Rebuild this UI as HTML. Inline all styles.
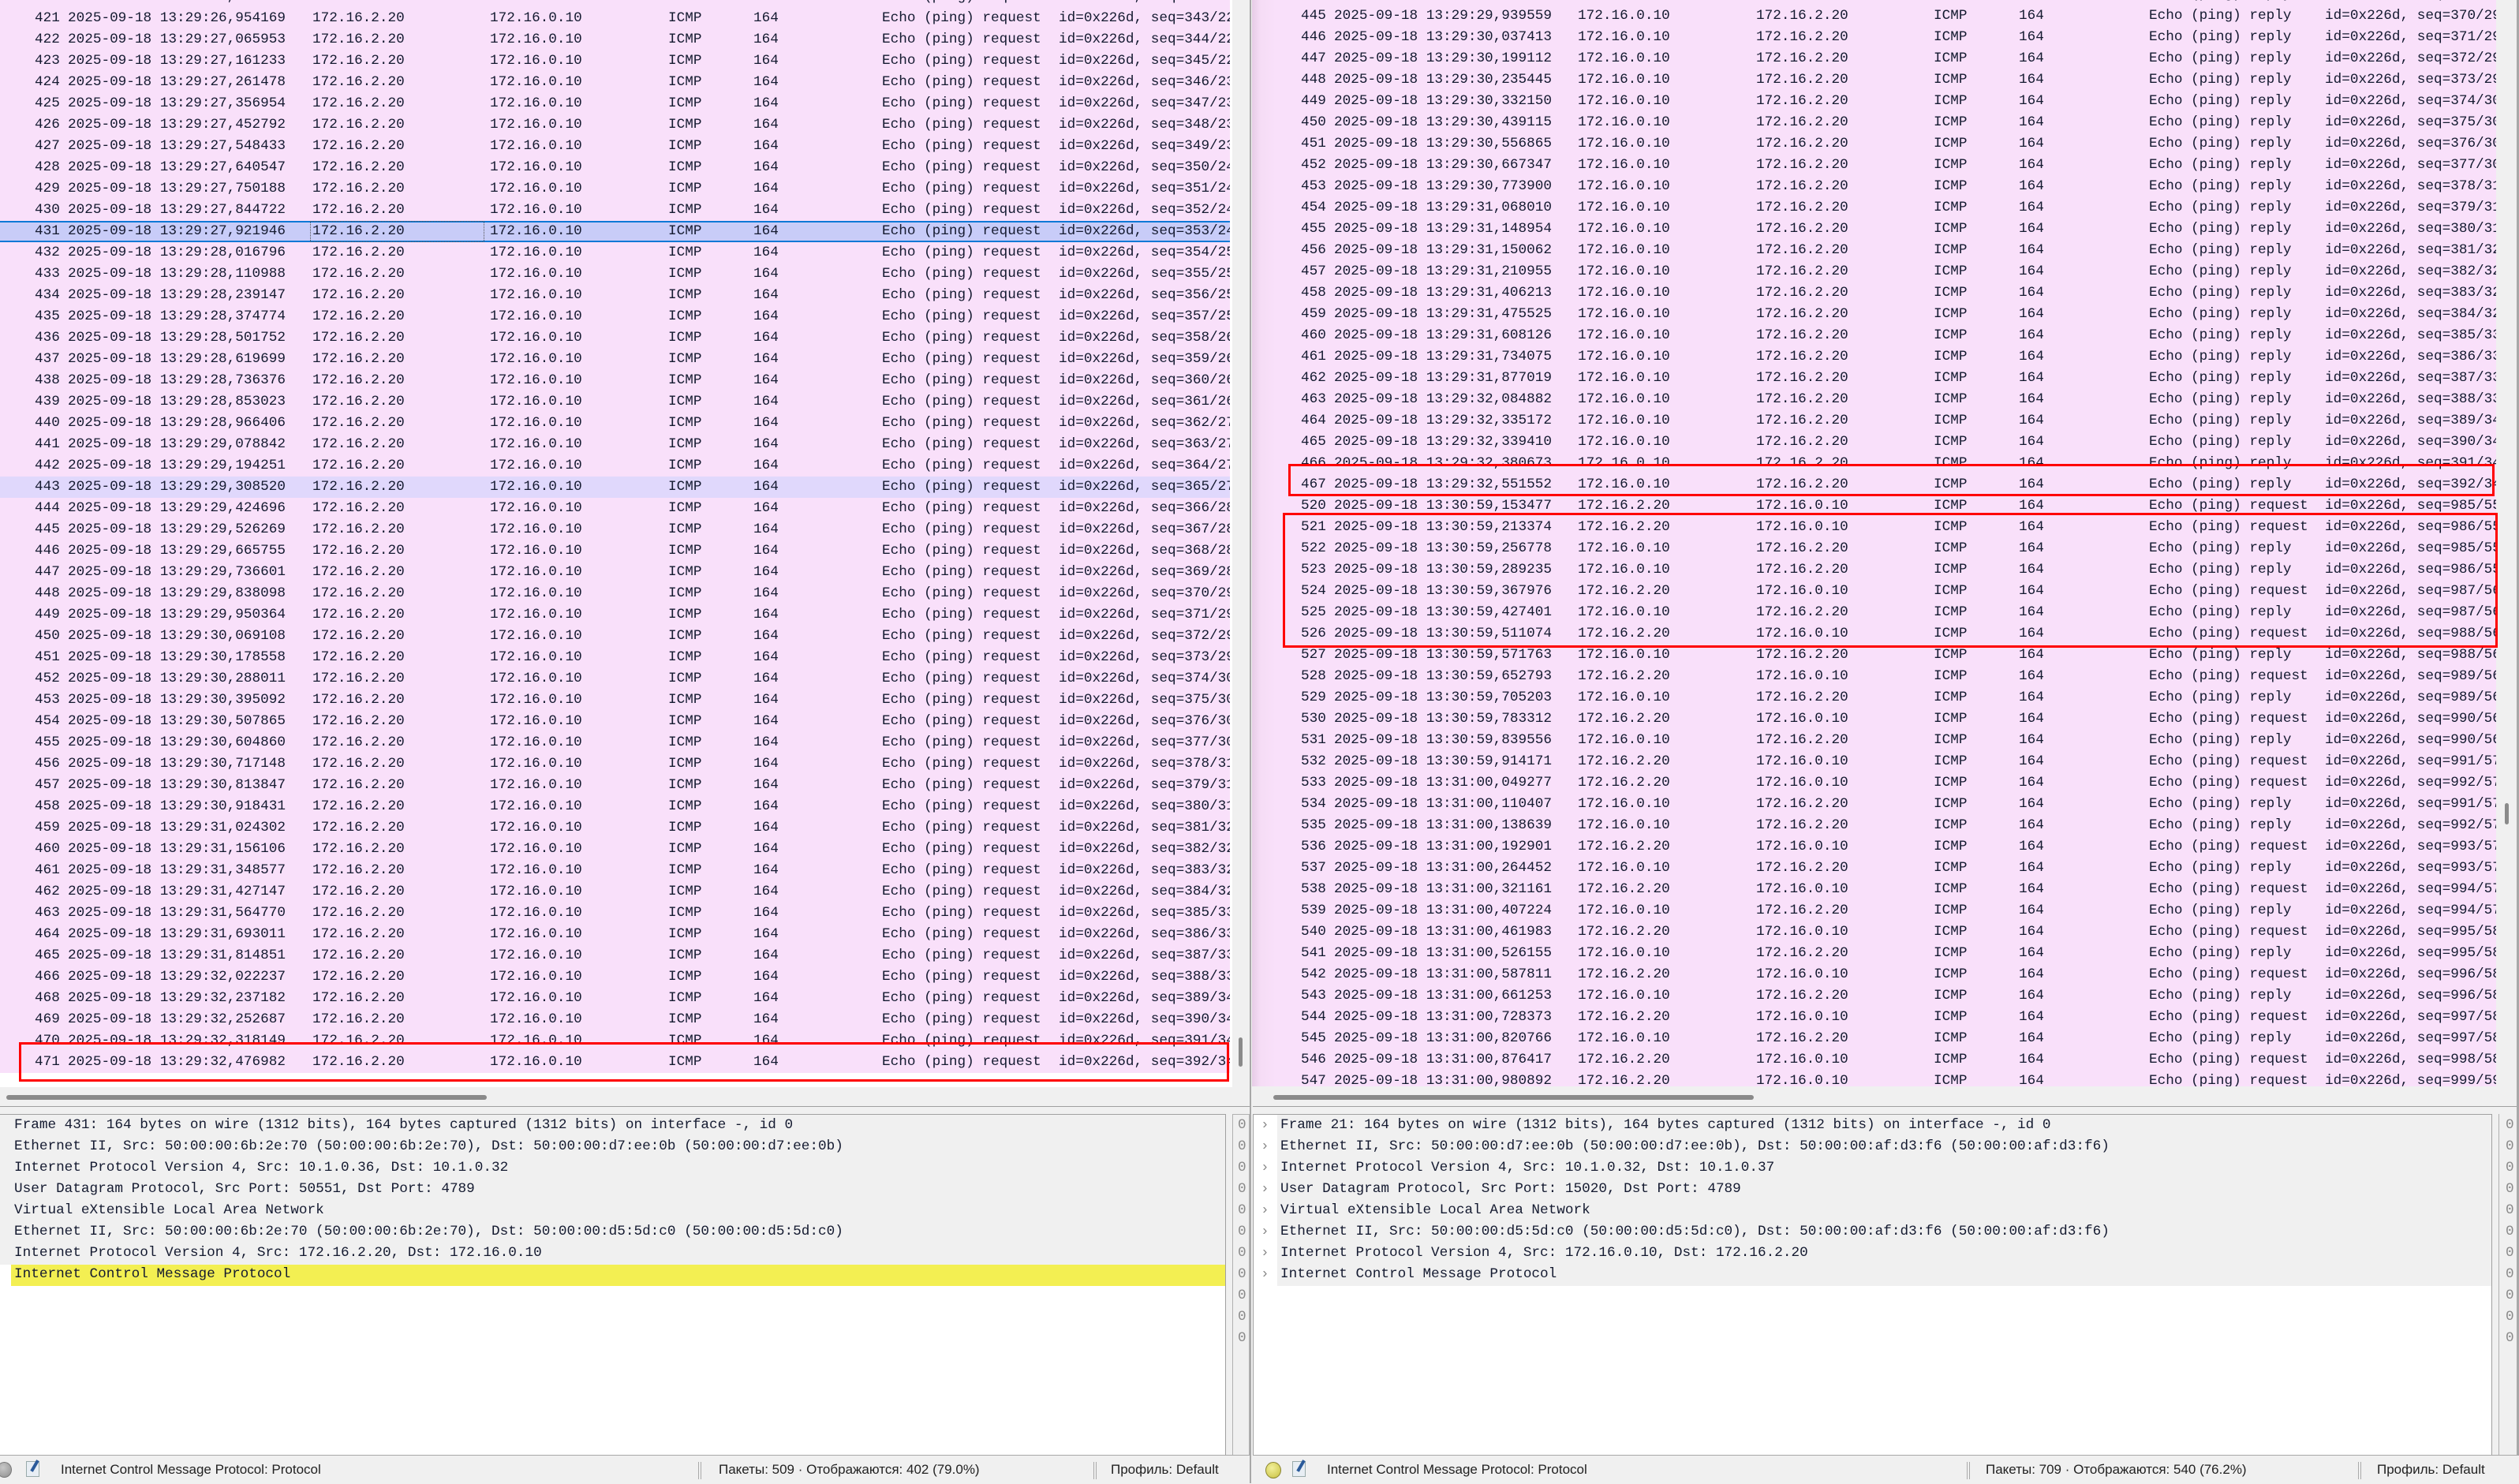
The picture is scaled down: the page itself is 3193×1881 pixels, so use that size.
<!DOCTYPE html>
<html><head><meta charset="utf-8">
<style>
*{margin:0;padding:0;box-sizing:border-box}
body{width:3193px;height:1880px;background:#f0f0f0;overflow:hidden;position:relative;font-family:"Liberation Mono",monospace;font-size:17.7px;color:#141a30}
.abs{position:absolute}
.list{position:absolute;overflow:hidden}
.r{height:27px;position:relative;white-space:pre;line-height:27px}
.r b{position:absolute;font-weight:normal;top:0}
.L .r b:nth-child(1){left:44px}.L .r b:nth-child(2){left:86px}.L .r b:nth-child(3){left:396px}.L .r b:nth-child(4){left:621px}.L .r b:nth-child(5){left:847px}.L .r b:nth-child(6){left:955px}.L .r b:nth-child(7){left:1118px}.L .r b:nth-child(8){left:1342px}
.R .r b:nth-child(1){left:62px}.R .r b:nth-child(2){left:104px}.R .r b:nth-child(3){left:413px}.R .r b:nth-child(4){left:639px}.R .r b:nth-child(5){left:864px}.R .r b:nth-child(6){left:972px}.R .r b:nth-child(7){left:1137px}.R .r b:nth-child(8){left:1360px}
.sel{background:#c8ccf8;border-top:2px solid #0a78d6;border-bottom:2px solid #0a78d6;line-height:23px}
.sel b{top:0}
.lav{background:#e0d8fc}
.box{position:absolute;border:3px solid #f00}
.det{position:absolute;white-space:nowrap;line-height:27px}
.det div{height:27px}
.bytes{position:absolute;color:#8a8a8a;line-height:27px;white-space:nowrap}
.st{position:absolute;top:1844px;height:36px;border-top:1px solid #a8a8a8;background:#f0f0f0;font-family:"Liberation Sans",sans-serif;font-size:17px;color:#222;line-height:36px;white-space:nowrap}
.st span{position:absolute;top:0}
.sep{position:absolute;top:8px;width:4px;height:22px;border-left:1px solid #aaa;border-right:1px solid #aaa}
</style></head><body>

<!-- LEFT WINDOW -->
<div class="abs" style="left:0;top:0;width:1559px;height:1360px;background:#f9e0fa"></div>
<div class="abs" style="left:0;top:1360px;width:1562px;height:18px;background:#fff"></div>
<div class="abs" style="left:1559px;top:0;width:3px;height:1378px;background:#fff"></div>
<div class="abs" style="left:1570px;top:1315px;width:5px;height:37px;background:#8a8a8a;border-radius:3px"></div>
<div class="abs" style="left:8px;top:1388px;width:609px;height:6px;background:#8a8a8a;border-radius:3px"></div>
<div class="abs" style="left:0;top:1402px;width:1584px;height:1px;background:#a0a0a0"></div>
<div class="abs" style="left:1584px;top:0;width:2px;height:1880px;background:#a8a8a8"></div>

<div class="list L" style="left:0;top:-17px;width:1559px;height:1377px">
<div class="r"><b>420</b><b>2025-09-18 13:29:26,858217</b><b>172.16.2.20</b><b>172.16.0.10</b><b>ICMP</b><b>164</b><b>Echo (ping) request</b><b>id=0x226d, seq=342/22017</b></div>
<div class="r"><b>421</b><b>2025-09-18 13:29:26,954169</b><b>172.16.2.20</b><b>172.16.0.10</b><b>ICMP</b><b>164</b><b>Echo (ping) request</b><b>id=0x226d, seq=343/22273</b></div>
<div class="r"><b>422</b><b>2025-09-18 13:29:27,065953</b><b>172.16.2.20</b><b>172.16.0.10</b><b>ICMP</b><b>164</b><b>Echo (ping) request</b><b>id=0x226d, seq=344/22529</b></div>
<div class="r"><b>423</b><b>2025-09-18 13:29:27,161233</b><b>172.16.2.20</b><b>172.16.0.10</b><b>ICMP</b><b>164</b><b>Echo (ping) request</b><b>id=0x226d, seq=345/22785</b></div>
<div class="r"><b>424</b><b>2025-09-18 13:29:27,261478</b><b>172.16.2.20</b><b>172.16.0.10</b><b>ICMP</b><b>164</b><b>Echo (ping) request</b><b>id=0x226d, seq=346/23041</b></div>
<div class="r"><b>425</b><b>2025-09-18 13:29:27,356954</b><b>172.16.2.20</b><b>172.16.0.10</b><b>ICMP</b><b>164</b><b>Echo (ping) request</b><b>id=0x226d, seq=347/23297</b></div>
<div class="r"><b>426</b><b>2025-09-18 13:29:27,452792</b><b>172.16.2.20</b><b>172.16.0.10</b><b>ICMP</b><b>164</b><b>Echo (ping) request</b><b>id=0x226d, seq=348/23553</b></div>
<div class="r"><b>427</b><b>2025-09-18 13:29:27,548433</b><b>172.16.2.20</b><b>172.16.0.10</b><b>ICMP</b><b>164</b><b>Echo (ping) request</b><b>id=0x226d, seq=349/23809</b></div>
<div class="r"><b>428</b><b>2025-09-18 13:29:27,640547</b><b>172.16.2.20</b><b>172.16.0.10</b><b>ICMP</b><b>164</b><b>Echo (ping) request</b><b>id=0x226d, seq=350/24065</b></div>
<div class="r"><b>429</b><b>2025-09-18 13:29:27,750188</b><b>172.16.2.20</b><b>172.16.0.10</b><b>ICMP</b><b>164</b><b>Echo (ping) request</b><b>id=0x226d, seq=351/24321</b></div>
<div class="r"><b>430</b><b>2025-09-18 13:29:27,844722</b><b>172.16.2.20</b><b>172.16.0.10</b><b>ICMP</b><b>164</b><b>Echo (ping) request</b><b>id=0x226d, seq=352/24577</b></div>
<div class="r sel"><b>431</b><b>2025-09-18 13:29:27,921946</b><b>172.16.2.20</b><b>172.16.0.10</b><b>ICMP</b><b>164</b><b>Echo (ping) request</b><b>id=0x226d, seq=353/24833</b><i class="abs" style="left:393px;top:-2px;width:221px;height:27px;border:1px dotted #555"></i></div>
<div class="r"><b>432</b><b>2025-09-18 13:29:28,016796</b><b>172.16.2.20</b><b>172.16.0.10</b><b>ICMP</b><b>164</b><b>Echo (ping) request</b><b>id=0x226d, seq=354/25089</b></div>
<div class="r"><b>433</b><b>2025-09-18 13:29:28,110988</b><b>172.16.2.20</b><b>172.16.0.10</b><b>ICMP</b><b>164</b><b>Echo (ping) request</b><b>id=0x226d, seq=355/25345</b></div>
<div class="r"><b>434</b><b>2025-09-18 13:29:28,239147</b><b>172.16.2.20</b><b>172.16.0.10</b><b>ICMP</b><b>164</b><b>Echo (ping) request</b><b>id=0x226d, seq=356/25601</b></div>
<div class="r"><b>435</b><b>2025-09-18 13:29:28,374774</b><b>172.16.2.20</b><b>172.16.0.10</b><b>ICMP</b><b>164</b><b>Echo (ping) request</b><b>id=0x226d, seq=357/25857</b></div>
<div class="r"><b>436</b><b>2025-09-18 13:29:28,501752</b><b>172.16.2.20</b><b>172.16.0.10</b><b>ICMP</b><b>164</b><b>Echo (ping) request</b><b>id=0x226d, seq=358/26113</b></div>
<div class="r"><b>437</b><b>2025-09-18 13:29:28,619699</b><b>172.16.2.20</b><b>172.16.0.10</b><b>ICMP</b><b>164</b><b>Echo (ping) request</b><b>id=0x226d, seq=359/26369</b></div>
<div class="r"><b>438</b><b>2025-09-18 13:29:28,736376</b><b>172.16.2.20</b><b>172.16.0.10</b><b>ICMP</b><b>164</b><b>Echo (ping) request</b><b>id=0x226d, seq=360/26625</b></div>
<div class="r"><b>439</b><b>2025-09-18 13:29:28,853023</b><b>172.16.2.20</b><b>172.16.0.10</b><b>ICMP</b><b>164</b><b>Echo (ping) request</b><b>id=0x226d, seq=361/26881</b></div>
<div class="r"><b>440</b><b>2025-09-18 13:29:28,966406</b><b>172.16.2.20</b><b>172.16.0.10</b><b>ICMP</b><b>164</b><b>Echo (ping) request</b><b>id=0x226d, seq=362/27137</b></div>
<div class="r"><b>441</b><b>2025-09-18 13:29:29,078842</b><b>172.16.2.20</b><b>172.16.0.10</b><b>ICMP</b><b>164</b><b>Echo (ping) request</b><b>id=0x226d, seq=363/27393</b></div>
<div class="r"><b>442</b><b>2025-09-18 13:29:29,194251</b><b>172.16.2.20</b><b>172.16.0.10</b><b>ICMP</b><b>164</b><b>Echo (ping) request</b><b>id=0x226d, seq=364/27649</b></div>
<div class="r lav"><b>443</b><b>2025-09-18 13:29:29,308520</b><b>172.16.2.20</b><b>172.16.0.10</b><b>ICMP</b><b>164</b><b>Echo (ping) request</b><b>id=0x226d, seq=365/27905</b></div>
<div class="r"><b>444</b><b>2025-09-18 13:29:29,424696</b><b>172.16.2.20</b><b>172.16.0.10</b><b>ICMP</b><b>164</b><b>Echo (ping) request</b><b>id=0x226d, seq=366/28161</b></div>
<div class="r"><b>445</b><b>2025-09-18 13:29:29,526269</b><b>172.16.2.20</b><b>172.16.0.10</b><b>ICMP</b><b>164</b><b>Echo (ping) request</b><b>id=0x226d, seq=367/28417</b></div>
<div class="r"><b>446</b><b>2025-09-18 13:29:29,665755</b><b>172.16.2.20</b><b>172.16.0.10</b><b>ICMP</b><b>164</b><b>Echo (ping) request</b><b>id=0x226d, seq=368/28673</b></div>
<div class="r"><b>447</b><b>2025-09-18 13:29:29,736601</b><b>172.16.2.20</b><b>172.16.0.10</b><b>ICMP</b><b>164</b><b>Echo (ping) request</b><b>id=0x226d, seq=369/28929</b></div>
<div class="r"><b>448</b><b>2025-09-18 13:29:29,838098</b><b>172.16.2.20</b><b>172.16.0.10</b><b>ICMP</b><b>164</b><b>Echo (ping) request</b><b>id=0x226d, seq=370/29185</b></div>
<div class="r"><b>449</b><b>2025-09-18 13:29:29,950364</b><b>172.16.2.20</b><b>172.16.0.10</b><b>ICMP</b><b>164</b><b>Echo (ping) request</b><b>id=0x226d, seq=371/29441</b></div>
<div class="r"><b>450</b><b>2025-09-18 13:29:30,069108</b><b>172.16.2.20</b><b>172.16.0.10</b><b>ICMP</b><b>164</b><b>Echo (ping) request</b><b>id=0x226d, seq=372/29697</b></div>
<div class="r"><b>451</b><b>2025-09-18 13:29:30,178558</b><b>172.16.2.20</b><b>172.16.0.10</b><b>ICMP</b><b>164</b><b>Echo (ping) request</b><b>id=0x226d, seq=373/29953</b></div>
<div class="r"><b>452</b><b>2025-09-18 13:29:30,288011</b><b>172.16.2.20</b><b>172.16.0.10</b><b>ICMP</b><b>164</b><b>Echo (ping) request</b><b>id=0x226d, seq=374/30209</b></div>
<div class="r"><b>453</b><b>2025-09-18 13:29:30,395092</b><b>172.16.2.20</b><b>172.16.0.10</b><b>ICMP</b><b>164</b><b>Echo (ping) request</b><b>id=0x226d, seq=375/30465</b></div>
<div class="r"><b>454</b><b>2025-09-18 13:29:30,507865</b><b>172.16.2.20</b><b>172.16.0.10</b><b>ICMP</b><b>164</b><b>Echo (ping) request</b><b>id=0x226d, seq=376/30721</b></div>
<div class="r"><b>455</b><b>2025-09-18 13:29:30,604860</b><b>172.16.2.20</b><b>172.16.0.10</b><b>ICMP</b><b>164</b><b>Echo (ping) request</b><b>id=0x226d, seq=377/30977</b></div>
<div class="r"><b>456</b><b>2025-09-18 13:29:30,717148</b><b>172.16.2.20</b><b>172.16.0.10</b><b>ICMP</b><b>164</b><b>Echo (ping) request</b><b>id=0x226d, seq=378/31233</b></div>
<div class="r"><b>457</b><b>2025-09-18 13:29:30,813847</b><b>172.16.2.20</b><b>172.16.0.10</b><b>ICMP</b><b>164</b><b>Echo (ping) request</b><b>id=0x226d, seq=379/31489</b></div>
<div class="r"><b>458</b><b>2025-09-18 13:29:30,918431</b><b>172.16.2.20</b><b>172.16.0.10</b><b>ICMP</b><b>164</b><b>Echo (ping) request</b><b>id=0x226d, seq=380/31745</b></div>
<div class="r"><b>459</b><b>2025-09-18 13:29:31,024302</b><b>172.16.2.20</b><b>172.16.0.10</b><b>ICMP</b><b>164</b><b>Echo (ping) request</b><b>id=0x226d, seq=381/32001</b></div>
<div class="r"><b>460</b><b>2025-09-18 13:29:31,156106</b><b>172.16.2.20</b><b>172.16.0.10</b><b>ICMP</b><b>164</b><b>Echo (ping) request</b><b>id=0x226d, seq=382/32257</b></div>
<div class="r"><b>461</b><b>2025-09-18 13:29:31,348577</b><b>172.16.2.20</b><b>172.16.0.10</b><b>ICMP</b><b>164</b><b>Echo (ping) request</b><b>id=0x226d, seq=383/32513</b></div>
<div class="r"><b>462</b><b>2025-09-18 13:29:31,427147</b><b>172.16.2.20</b><b>172.16.0.10</b><b>ICMP</b><b>164</b><b>Echo (ping) request</b><b>id=0x226d, seq=384/32769</b></div>
<div class="r"><b>463</b><b>2025-09-18 13:29:31,564770</b><b>172.16.2.20</b><b>172.16.0.10</b><b>ICMP</b><b>164</b><b>Echo (ping) request</b><b>id=0x226d, seq=385/33025</b></div>
<div class="r"><b>464</b><b>2025-09-18 13:29:31,693011</b><b>172.16.2.20</b><b>172.16.0.10</b><b>ICMP</b><b>164</b><b>Echo (ping) request</b><b>id=0x226d, seq=386/33281</b></div>
<div class="r"><b>465</b><b>2025-09-18 13:29:31,814851</b><b>172.16.2.20</b><b>172.16.0.10</b><b>ICMP</b><b>164</b><b>Echo (ping) request</b><b>id=0x226d, seq=387/33537</b></div>
<div class="r"><b>466</b><b>2025-09-18 13:29:32,022237</b><b>172.16.2.20</b><b>172.16.0.10</b><b>ICMP</b><b>164</b><b>Echo (ping) request</b><b>id=0x226d, seq=388/33793</b></div>
<div class="r"><b>468</b><b>2025-09-18 13:29:32,237182</b><b>172.16.2.20</b><b>172.16.0.10</b><b>ICMP</b><b>164</b><b>Echo (ping) request</b><b>id=0x226d, seq=389/34049</b></div>
<div class="r"><b>469</b><b>2025-09-18 13:29:32,252687</b><b>172.16.2.20</b><b>172.16.0.10</b><b>ICMP</b><b>164</b><b>Echo (ping) request</b><b>id=0x226d, seq=390/34305</b></div>
<div class="r"><b>470</b><b>2025-09-18 13:29:32,318149</b><b>172.16.2.20</b><b>172.16.0.10</b><b>ICMP</b><b>164</b><b>Echo (ping) request</b><b>id=0x226d, seq=391/34561</b></div>
<div class="r"><b>471</b><b>2025-09-18 13:29:32,476982</b><b>172.16.2.20</b><b>172.16.0.10</b><b>ICMP</b><b>164</b><b>Echo (ping) request</b><b>id=0x226d, seq=392/34817</b></div>
</div>
<div class="box" style="left:24px;top:1321px;width:1534px;height:50px"></div>

<!-- left details -->
<div class="abs" style="left:0;top:1412px;width:1554px;height:433px;background:#fff;border:1px solid #a0a0a0;border-left:none"></div>
<div class="abs" style="left:0;top:1413px;width:1553px;height:190px;background:#f0f0f0"></div>
<div class="abs" style="left:14px;top:1603px;width:1539px;height:27px;background:#f3ef52"></div>
<div class="det" style="left:18px;top:1413px"><div>Frame 431: 164 bytes on wire (1312 bits), 164 bytes captured (1312 bits) on interface -, id 0</div><div>Ethernet II, Src: 50:00:00:6b:2e:70 (50:00:00:6b:2e:70), Dst: 50:00:00:d7:ee:0b (50:00:00:d7:ee:0b)</div><div>Internet Protocol Version 4, Src: 10.1.0.36, Dst: 10.1.0.32</div><div>User Datagram Protocol, Src Port: 50551, Dst Port: 4789</div><div>Virtual eXtensible Local Area Network</div><div>Ethernet II, Src: 50:00:00:6b:2e:70 (50:00:00:6b:2e:70), Dst: 50:00:00:d5:5d:c0 (50:00:00:d5:5d:c0)</div><div>Internet Protocol Version 4, Src: 172.16.2.20, Dst: 172.16.0.10</div><div>Internet Control Message Protocol</div></div>
<div class="abs" style="left:1562px;top:1412px;width:22px;height:433px;background:#f0f0f0;border:1px solid #b0b0b0"></div>
<div class="bytes" style="left:1569px;top:1413px">0<br>0<br>0<br>0<br>0<br>0<br>0<br>0<br>0<br>0<br>0</div>

<!-- RIGHT WINDOW -->
<div class="abs" style="left:1587px;top:0;width:1577px;height:1377px;background:linear-gradient(90deg,#e6cce6 0,#f5dcf5 10px,#f9e0fa 30px)"></div>
<div class="abs" style="left:3164px;top:0;width:26px;height:1380px;background:#f0f0f0"></div>
<div class="abs" style="left:3190px;top:0;width:3px;height:1880px;background:#a8a8a8"></div>
<div class="abs" style="left:3175px;top:1018px;width:5px;height:27px;background:#8a8a8a;border-radius:3px"></div>
<div class="abs" style="left:1614px;top:1388px;width:609px;height:6px;background:#8a8a8a;border-radius:3px"></div>
<div class="abs" style="left:1588px;top:1402px;width:1602px;height:1px;background:#a0a0a0"></div>

<div class="list R" style="left:1587px;top:-20px;width:1577px;height:1397px">
<div class="r"><b>444</b><b>2025-09-18 13:29:29,853150</b><b>172.16.0.10</b><b>172.16.2.20</b><b>ICMP</b><b>164</b><b>Echo (ping) reply</b><b>id=0x226d, seq=369/28929</b></div>
<div class="r"><b>445</b><b>2025-09-18 13:29:29,939559</b><b>172.16.0.10</b><b>172.16.2.20</b><b>ICMP</b><b>164</b><b>Echo (ping) reply</b><b>id=0x226d, seq=370/29185</b></div>
<div class="r"><b>446</b><b>2025-09-18 13:29:30,037413</b><b>172.16.0.10</b><b>172.16.2.20</b><b>ICMP</b><b>164</b><b>Echo (ping) reply</b><b>id=0x226d, seq=371/29441</b></div>
<div class="r"><b>447</b><b>2025-09-18 13:29:30,199112</b><b>172.16.0.10</b><b>172.16.2.20</b><b>ICMP</b><b>164</b><b>Echo (ping) reply</b><b>id=0x226d, seq=372/29697</b></div>
<div class="r"><b>448</b><b>2025-09-18 13:29:30,235445</b><b>172.16.0.10</b><b>172.16.2.20</b><b>ICMP</b><b>164</b><b>Echo (ping) reply</b><b>id=0x226d, seq=373/29953</b></div>
<div class="r"><b>449</b><b>2025-09-18 13:29:30,332150</b><b>172.16.0.10</b><b>172.16.2.20</b><b>ICMP</b><b>164</b><b>Echo (ping) reply</b><b>id=0x226d, seq=374/30209</b></div>
<div class="r"><b>450</b><b>2025-09-18 13:29:30,439115</b><b>172.16.0.10</b><b>172.16.2.20</b><b>ICMP</b><b>164</b><b>Echo (ping) reply</b><b>id=0x226d, seq=375/30465</b></div>
<div class="r"><b>451</b><b>2025-09-18 13:29:30,556865</b><b>172.16.0.10</b><b>172.16.2.20</b><b>ICMP</b><b>164</b><b>Echo (ping) reply</b><b>id=0x226d, seq=376/30721</b></div>
<div class="r"><b>452</b><b>2025-09-18 13:29:30,667347</b><b>172.16.0.10</b><b>172.16.2.20</b><b>ICMP</b><b>164</b><b>Echo (ping) reply</b><b>id=0x226d, seq=377/30977</b></div>
<div class="r"><b>453</b><b>2025-09-18 13:29:30,773900</b><b>172.16.0.10</b><b>172.16.2.20</b><b>ICMP</b><b>164</b><b>Echo (ping) reply</b><b>id=0x226d, seq=378/31233</b></div>
<div class="r"><b>454</b><b>2025-09-18 13:29:31,068010</b><b>172.16.0.10</b><b>172.16.2.20</b><b>ICMP</b><b>164</b><b>Echo (ping) reply</b><b>id=0x226d, seq=379/31489</b></div>
<div class="r"><b>455</b><b>2025-09-18 13:29:31,148954</b><b>172.16.0.10</b><b>172.16.2.20</b><b>ICMP</b><b>164</b><b>Echo (ping) reply</b><b>id=0x226d, seq=380/31745</b></div>
<div class="r"><b>456</b><b>2025-09-18 13:29:31,150062</b><b>172.16.0.10</b><b>172.16.2.20</b><b>ICMP</b><b>164</b><b>Echo (ping) reply</b><b>id=0x226d, seq=381/32001</b></div>
<div class="r"><b>457</b><b>2025-09-18 13:29:31,210955</b><b>172.16.0.10</b><b>172.16.2.20</b><b>ICMP</b><b>164</b><b>Echo (ping) reply</b><b>id=0x226d, seq=382/32257</b></div>
<div class="r"><b>458</b><b>2025-09-18 13:29:31,406213</b><b>172.16.0.10</b><b>172.16.2.20</b><b>ICMP</b><b>164</b><b>Echo (ping) reply</b><b>id=0x226d, seq=383/32513</b></div>
<div class="r"><b>459</b><b>2025-09-18 13:29:31,475525</b><b>172.16.0.10</b><b>172.16.2.20</b><b>ICMP</b><b>164</b><b>Echo (ping) reply</b><b>id=0x226d, seq=384/32769</b></div>
<div class="r"><b>460</b><b>2025-09-18 13:29:31,608126</b><b>172.16.0.10</b><b>172.16.2.20</b><b>ICMP</b><b>164</b><b>Echo (ping) reply</b><b>id=0x226d, seq=385/33025</b></div>
<div class="r"><b>461</b><b>2025-09-18 13:29:31,734075</b><b>172.16.0.10</b><b>172.16.2.20</b><b>ICMP</b><b>164</b><b>Echo (ping) reply</b><b>id=0x226d, seq=386/33281</b></div>
<div class="r"><b>462</b><b>2025-09-18 13:29:31,877019</b><b>172.16.0.10</b><b>172.16.2.20</b><b>ICMP</b><b>164</b><b>Echo (ping) reply</b><b>id=0x226d, seq=387/33537</b></div>
<div class="r"><b>463</b><b>2025-09-18 13:29:32,084882</b><b>172.16.0.10</b><b>172.16.2.20</b><b>ICMP</b><b>164</b><b>Echo (ping) reply</b><b>id=0x226d, seq=388/33793</b></div>
<div class="r"><b>464</b><b>2025-09-18 13:29:32,335172</b><b>172.16.0.10</b><b>172.16.2.20</b><b>ICMP</b><b>164</b><b>Echo (ping) reply</b><b>id=0x226d, seq=389/34049</b></div>
<div class="r"><b>465</b><b>2025-09-18 13:29:32,339410</b><b>172.16.0.10</b><b>172.16.2.20</b><b>ICMP</b><b>164</b><b>Echo (ping) reply</b><b>id=0x226d, seq=390/34305</b></div>
<div class="r"><b>466</b><b>2025-09-18 13:29:32,380673</b><b>172.16.0.10</b><b>172.16.2.20</b><b>ICMP</b><b>164</b><b>Echo (ping) reply</b><b>id=0x226d, seq=391/34561</b></div>
<div class="r"><b>467</b><b>2025-09-18 13:29:32,551552</b><b>172.16.0.10</b><b>172.16.2.20</b><b>ICMP</b><b>164</b><b>Echo (ping) reply</b><b>id=0x226d, seq=392/34817</b></div>
<div class="r"><b>520</b><b>2025-09-18 13:30:59,153477</b><b>172.16.2.20</b><b>172.16.0.10</b><b>ICMP</b><b>164</b><b>Echo (ping) request</b><b>id=0x226d, seq=985/55555</b></div>
<div class="r"><b>521</b><b>2025-09-18 13:30:59,213374</b><b>172.16.2.20</b><b>172.16.0.10</b><b>ICMP</b><b>164</b><b>Echo (ping) request</b><b>id=0x226d, seq=986/55811</b></div>
<div class="r"><b>522</b><b>2025-09-18 13:30:59,256778</b><b>172.16.0.10</b><b>172.16.2.20</b><b>ICMP</b><b>164</b><b>Echo (ping) reply</b><b>id=0x226d, seq=985/55555</b></div>
<div class="r"><b>523</b><b>2025-09-18 13:30:59,289235</b><b>172.16.0.10</b><b>172.16.2.20</b><b>ICMP</b><b>164</b><b>Echo (ping) reply</b><b>id=0x226d, seq=986/55811</b></div>
<div class="r"><b>524</b><b>2025-09-18 13:30:59,367976</b><b>172.16.2.20</b><b>172.16.0.10</b><b>ICMP</b><b>164</b><b>Echo (ping) request</b><b>id=0x226d, seq=987/56067</b></div>
<div class="r"><b>525</b><b>2025-09-18 13:30:59,427401</b><b>172.16.0.10</b><b>172.16.2.20</b><b>ICMP</b><b>164</b><b>Echo (ping) reply</b><b>id=0x226d, seq=987/56067</b></div>
<div class="r"><b>526</b><b>2025-09-18 13:30:59,511074</b><b>172.16.2.20</b><b>172.16.0.10</b><b>ICMP</b><b>164</b><b>Echo (ping) request</b><b>id=0x226d, seq=988/56323</b></div>
<div class="r"><b>527</b><b>2025-09-18 13:30:59,571763</b><b>172.16.0.10</b><b>172.16.2.20</b><b>ICMP</b><b>164</b><b>Echo (ping) reply</b><b>id=0x226d, seq=988/56323</b></div>
<div class="r"><b>528</b><b>2025-09-18 13:30:59,652793</b><b>172.16.2.20</b><b>172.16.0.10</b><b>ICMP</b><b>164</b><b>Echo (ping) request</b><b>id=0x226d, seq=989/56579</b></div>
<div class="r"><b>529</b><b>2025-09-18 13:30:59,705203</b><b>172.16.0.10</b><b>172.16.2.20</b><b>ICMP</b><b>164</b><b>Echo (ping) reply</b><b>id=0x226d, seq=989/56579</b></div>
<div class="r"><b>530</b><b>2025-09-18 13:30:59,783312</b><b>172.16.2.20</b><b>172.16.0.10</b><b>ICMP</b><b>164</b><b>Echo (ping) request</b><b>id=0x226d, seq=990/56835</b></div>
<div class="r"><b>531</b><b>2025-09-18 13:30:59,839556</b><b>172.16.0.10</b><b>172.16.2.20</b><b>ICMP</b><b>164</b><b>Echo (ping) reply</b><b>id=0x226d, seq=990/56835</b></div>
<div class="r"><b>532</b><b>2025-09-18 13:30:59,914171</b><b>172.16.2.20</b><b>172.16.0.10</b><b>ICMP</b><b>164</b><b>Echo (ping) request</b><b>id=0x226d, seq=991/57091</b></div>
<div class="r"><b>533</b><b>2025-09-18 13:31:00,049277</b><b>172.16.2.20</b><b>172.16.0.10</b><b>ICMP</b><b>164</b><b>Echo (ping) request</b><b>id=0x226d, seq=992/57347</b></div>
<div class="r"><b>534</b><b>2025-09-18 13:31:00,110407</b><b>172.16.0.10</b><b>172.16.2.20</b><b>ICMP</b><b>164</b><b>Echo (ping) reply</b><b>id=0x226d, seq=991/57091</b></div>
<div class="r"><b>535</b><b>2025-09-18 13:31:00,138639</b><b>172.16.0.10</b><b>172.16.2.20</b><b>ICMP</b><b>164</b><b>Echo (ping) reply</b><b>id=0x226d, seq=992/57347</b></div>
<div class="r"><b>536</b><b>2025-09-18 13:31:00,192901</b><b>172.16.2.20</b><b>172.16.0.10</b><b>ICMP</b><b>164</b><b>Echo (ping) request</b><b>id=0x226d, seq=993/57603</b></div>
<div class="r"><b>537</b><b>2025-09-18 13:31:00,264452</b><b>172.16.0.10</b><b>172.16.2.20</b><b>ICMP</b><b>164</b><b>Echo (ping) reply</b><b>id=0x226d, seq=993/57603</b></div>
<div class="r"><b>538</b><b>2025-09-18 13:31:00,321161</b><b>172.16.2.20</b><b>172.16.0.10</b><b>ICMP</b><b>164</b><b>Echo (ping) request</b><b>id=0x226d, seq=994/57859</b></div>
<div class="r"><b>539</b><b>2025-09-18 13:31:00,407224</b><b>172.16.0.10</b><b>172.16.2.20</b><b>ICMP</b><b>164</b><b>Echo (ping) reply</b><b>id=0x226d, seq=994/57859</b></div>
<div class="r"><b>540</b><b>2025-09-18 13:31:00,461983</b><b>172.16.2.20</b><b>172.16.0.10</b><b>ICMP</b><b>164</b><b>Echo (ping) request</b><b>id=0x226d, seq=995/58115</b></div>
<div class="r"><b>541</b><b>2025-09-18 13:31:00,526155</b><b>172.16.0.10</b><b>172.16.2.20</b><b>ICMP</b><b>164</b><b>Echo (ping) reply</b><b>id=0x226d, seq=995/58115</b></div>
<div class="r"><b>542</b><b>2025-09-18 13:31:00,587811</b><b>172.16.2.20</b><b>172.16.0.10</b><b>ICMP</b><b>164</b><b>Echo (ping) request</b><b>id=0x226d, seq=996/58371</b></div>
<div class="r"><b>543</b><b>2025-09-18 13:31:00,661253</b><b>172.16.0.10</b><b>172.16.2.20</b><b>ICMP</b><b>164</b><b>Echo (ping) reply</b><b>id=0x226d, seq=996/58371</b></div>
<div class="r"><b>544</b><b>2025-09-18 13:31:00,728373</b><b>172.16.2.20</b><b>172.16.0.10</b><b>ICMP</b><b>164</b><b>Echo (ping) request</b><b>id=0x226d, seq=997/58627</b></div>
<div class="r"><b>545</b><b>2025-09-18 13:31:00,820766</b><b>172.16.0.10</b><b>172.16.2.20</b><b>ICMP</b><b>164</b><b>Echo (ping) reply</b><b>id=0x226d, seq=997/58627</b></div>
<div class="r"><b>546</b><b>2025-09-18 13:31:00,876417</b><b>172.16.2.20</b><b>172.16.0.10</b><b>ICMP</b><b>164</b><b>Echo (ping) request</b><b>id=0x226d, seq=998/58883</b></div>
<div class="r"><b>547</b><b>2025-09-18 13:31:00,980892</b><b>172.16.2.20</b><b>172.16.0.10</b><b>ICMP</b><b>164</b><b>Echo (ping) request</b><b>id=0x226d, seq=999/59139</b></div>
</div>
<div class="box" style="left:1633px;top:588px;width:1529px;height:41px"></div>
<div class="box" style="left:1626px;top:650px;width:1540px;height:171px"></div>

<!-- right details -->
<div class="abs" style="left:1588px;top:1412px;width:1571px;height:433px;background:#fff;border:1px solid #a0a0a0"></div>
<div class="abs" style="left:1619px;top:1413px;width:1539px;height:217px;background:#f0f0f0"></div>
<div class="det" style="left:1598px;top:1413px;color:#888"><div>›</div><div>›</div><div>›</div><div>›</div><div>›</div><div>›</div><div>›</div><div>›</div></div>
<div class="det" style="left:1623px;top:1413px"><div>Frame 21: 164 bytes on wire (1312 bits), 164 bytes captured (1312 bits) on interface -, id 0</div><div>Ethernet II, Src: 50:00:00:d7:ee:0b (50:00:00:d7:ee:0b), Dst: 50:00:00:af:d3:f6 (50:00:00:af:d3:f6)</div><div>Internet Protocol Version 4, Src: 10.1.0.32, Dst: 10.1.0.37</div><div>User Datagram Protocol, Src Port: 15020, Dst Port: 4789</div><div>Virtual eXtensible Local Area Network</div><div>Ethernet II, Src: 50:00:00:d5:5d:c0 (50:00:00:d5:5d:c0), Dst: 50:00:00:af:d3:f6 (50:00:00:af:d3:f6)</div><div>Internet Protocol Version 4, Src: 172.16.0.10, Dst: 172.16.2.20</div><div>Internet Control Message Protocol</div></div>
<div class="abs" style="left:3167px;top:1412px;width:23px;height:433px;background:#f0f0f0;border-left:1px solid #b0b0b0"></div>
<div class="bytes" style="left:3176px;top:1413px">0<br>0<br>0<br>0<br>0<br>0<br>0<br>0<br>0<br>0<br>0</div>

<!-- status bars -->
<div class="st" style="left:0;width:1584px"><i class="abs" style="left:-4px;top:8px;width:19px;height:20px;border-radius:50%;background:radial-gradient(circle at 40% 35%,#c8c8c8,#8e8e8e);border:1px solid #777"></i><i class="abs" style="left:33px;top:7px;width:17px;height:20px;background:#e8eef4;border:1px solid #9aa"></i><i class="abs" style="left:42px;top:5px;width:4px;height:16px;background:#2a5a9a;transform:rotate(30deg)"></i><span style="left:77px">Internet Control Message Protocol: Protocol</span><i class="sep" style="left:885px"></i><span style="left:911px">Пакеты: 509 · Отображаются: 402 (79.0%)</span><i class="sep" style="left:1386px"></i><span style="left:1408px">Профиль: Default</span></div>
<div class="st" style="left:1588px;width:1605px"><i class="abs" style="left:16px;top:8px;width:20px;height:21px;border-radius:50%;background:radial-gradient(circle at 40% 35%,#f2f09a,#c8c040);border:1px solid #8a8430"></i><i class="abs" style="left:50px;top:7px;width:17px;height:20px;background:#e8eef4;border:1px solid #9aa"></i><i class="abs" style="left:59px;top:5px;width:4px;height:16px;background:#2a5a9a;transform:rotate(30deg)"></i><span style="left:94px">Internet Control Message Protocol: Protocol</span><i class="sep" style="left:905px"></i><span style="left:929px">Пакеты: 709 · Отображаются: 540 (76.2%)</span><i class="sep" style="left:1401px"></i><span style="left:1425px">Профиль: Default</span></div>
</body></html>
